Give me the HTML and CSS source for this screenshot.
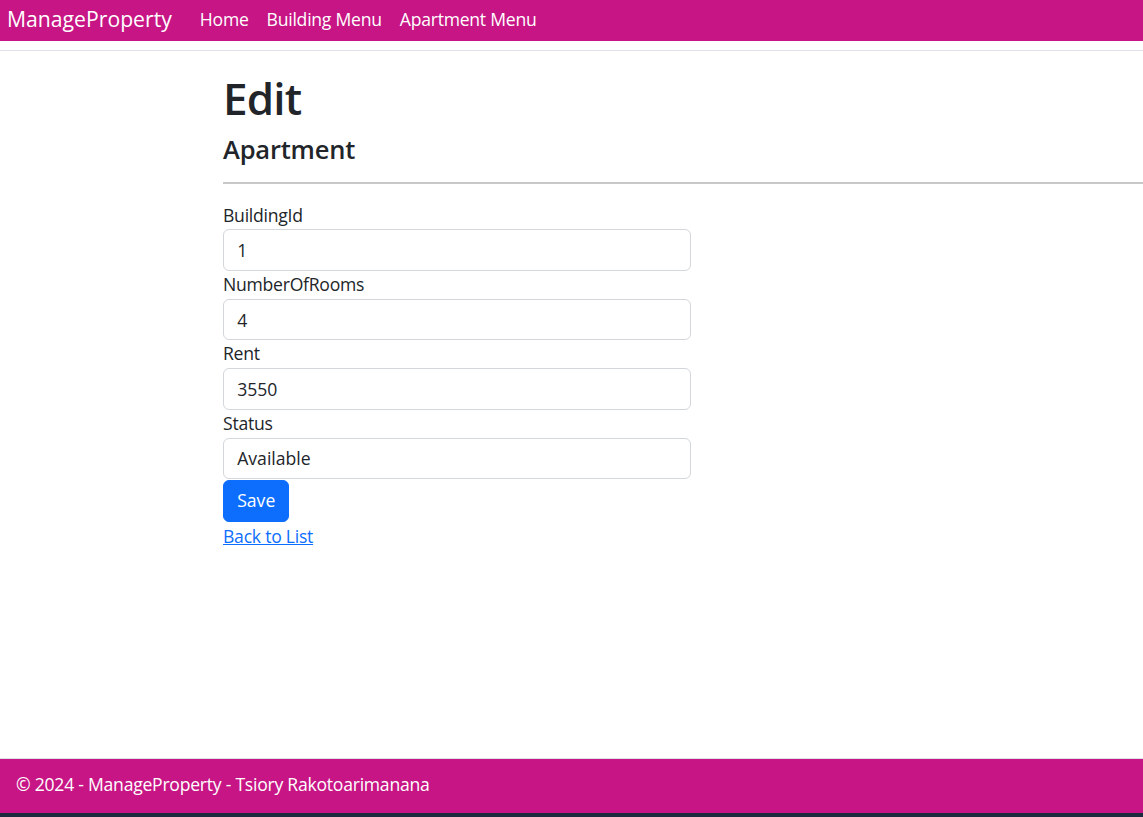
FILE: index.html
```html
<!DOCTYPE html>
<html lang="en">
<head>
<meta charset="utf-8">
<title>Edit - ManageProperty</title>
<link rel="stylesheet" href="styles.css">
</head>
<body>
<header class="site-header">
  <nav class="navbar">
    <a class="brand" href="#">ManageProperty</a>
    <ul class="nav-links">
      <li><a href="#">Home</a></li>
      <li><a href="#">Building Menu</a></li>
      <li><a href="#">Apartment Menu</a></li>
    </ul>
  </nav>
</header>
<main class="content">
  <h1 class="title">Edit</h1>
  <h4 class="subtitle">Apartment</h4>
  <hr class="divider">
  <form class="edit-form">
    <div class="field">
      <label class="field-label" for="b">BuildingId</label>
      <input class="field-input" id="b" value="1">
    </div>
    <div class="field">
      <label class="field-label" for="n">NumberOfRooms</label>
      <input class="field-input" id="n" value="4">
    </div>
    <div class="field">
      <label class="field-label" for="r">Rent</label>
      <input class="field-input" id="r" value="3550">
    </div>
    <div class="field">
      <label class="field-label" for="s">Status</label>
      <input class="field-input" id="s" value="Available">
    </div>
    <div class="actions">
      <button class="btn-save" type="button">Save</button>
    </div>
  </form>
  <div class="back"><a class="back-link" href="#">Back to List</a></div>
</main>
<footer class="site-footer">
  <div class="footer-text">© 2024 - ManageProperty - Tsiory Rakotoarimanana</div>
</footer>
<div class="bottom-strip"></div>
</body>
</html>
```

FILE: styles.css
```css
* { box-sizing: border-box; }
html, body { height: 100%; }
body {
  margin: 0;
  font-family: "Open Sans", "Noto Sans", sans-serif;
  font-size: 17.6px;
  line-height: 1.5;
  letter-spacing: -0.25px;
  color: #212529;
  background: #fff;
  display: flex;
  flex-direction: column;
  min-height: 100vh;
}
.site-header {
  padding-bottom: 9px;
  border-bottom: 1px solid #e0e0e8;
}
.navbar {
  background: #c71585;
  height: 41px;
  display: flex;
  align-items: center;
  padding-left: 7px;
  padding-bottom: 3px;
}
.brand {
  color: #fff;
  text-decoration: none;
  font-size: 21.2px;
  letter-spacing: 0;
  line-height: 1;
  margin-right: 28px;
}
.nav-links {
  list-style: none;
  margin: 0;
  padding: 0;
  display: flex;
  gap: 18px;
}
.nav-links a {
  color: #fff;
  text-decoration: none;
  font-size: 17.6px;
  line-height: 1;
}
.content {
  flex: 1;
  padding-left: 223px;
  padding-top: 21px;
}
.title {
  margin: 0 0 8.8px;
  font-size: 44px;
  font-weight: 600;
  letter-spacing: -0.8px;
  line-height: 1.2;
}
.subtitle {
  margin: 0;
  font-size: 25.5px;
  font-weight: 600;
  letter-spacing: -0.2px;
  line-height: 31.7px;
}
.divider {
  margin: 16.8px 0 17.6px;
  border: 0;
  border-top: 2px solid #c8c8c8;
  opacity: 1;
}
.edit-form {
  width: 468px;
}
.field-label {
  display: block;
  line-height: 27.8px;
}
.field-input {
  display: block;
  width: 100%;
  height: 41.6px;
  padding: 6.6px 13.2px;
  font: inherit;
  color: #212529;
  border: 1px solid #d3d6da;
  border-radius: 6px;
  background: #fff;
}
.actions {
  padding-top: 1px;
}
.btn-save {
  font: inherit;
  color: #fff;
  background: #0d6efd;
  border: 1px solid #0d6efd;
  border-radius: 6px;
  height: 41.6px;
  padding: 0 13.2px;
  line-height: 1;
}
.back {
  margin-top: 1px;
}
.back-link {
  color: #0d6efd;
}
.site-footer {
  border-top: 1px solid #dee2e6;
  background: #c71585;
  height: 55px;
  display: flex;
  align-items: center;
  padding-left: 16px;
  padding-bottom: 3px;
  color: #fff;
}
.bottom-strip {
  height: 4px;
  background: #1b2a3d;
}
```
